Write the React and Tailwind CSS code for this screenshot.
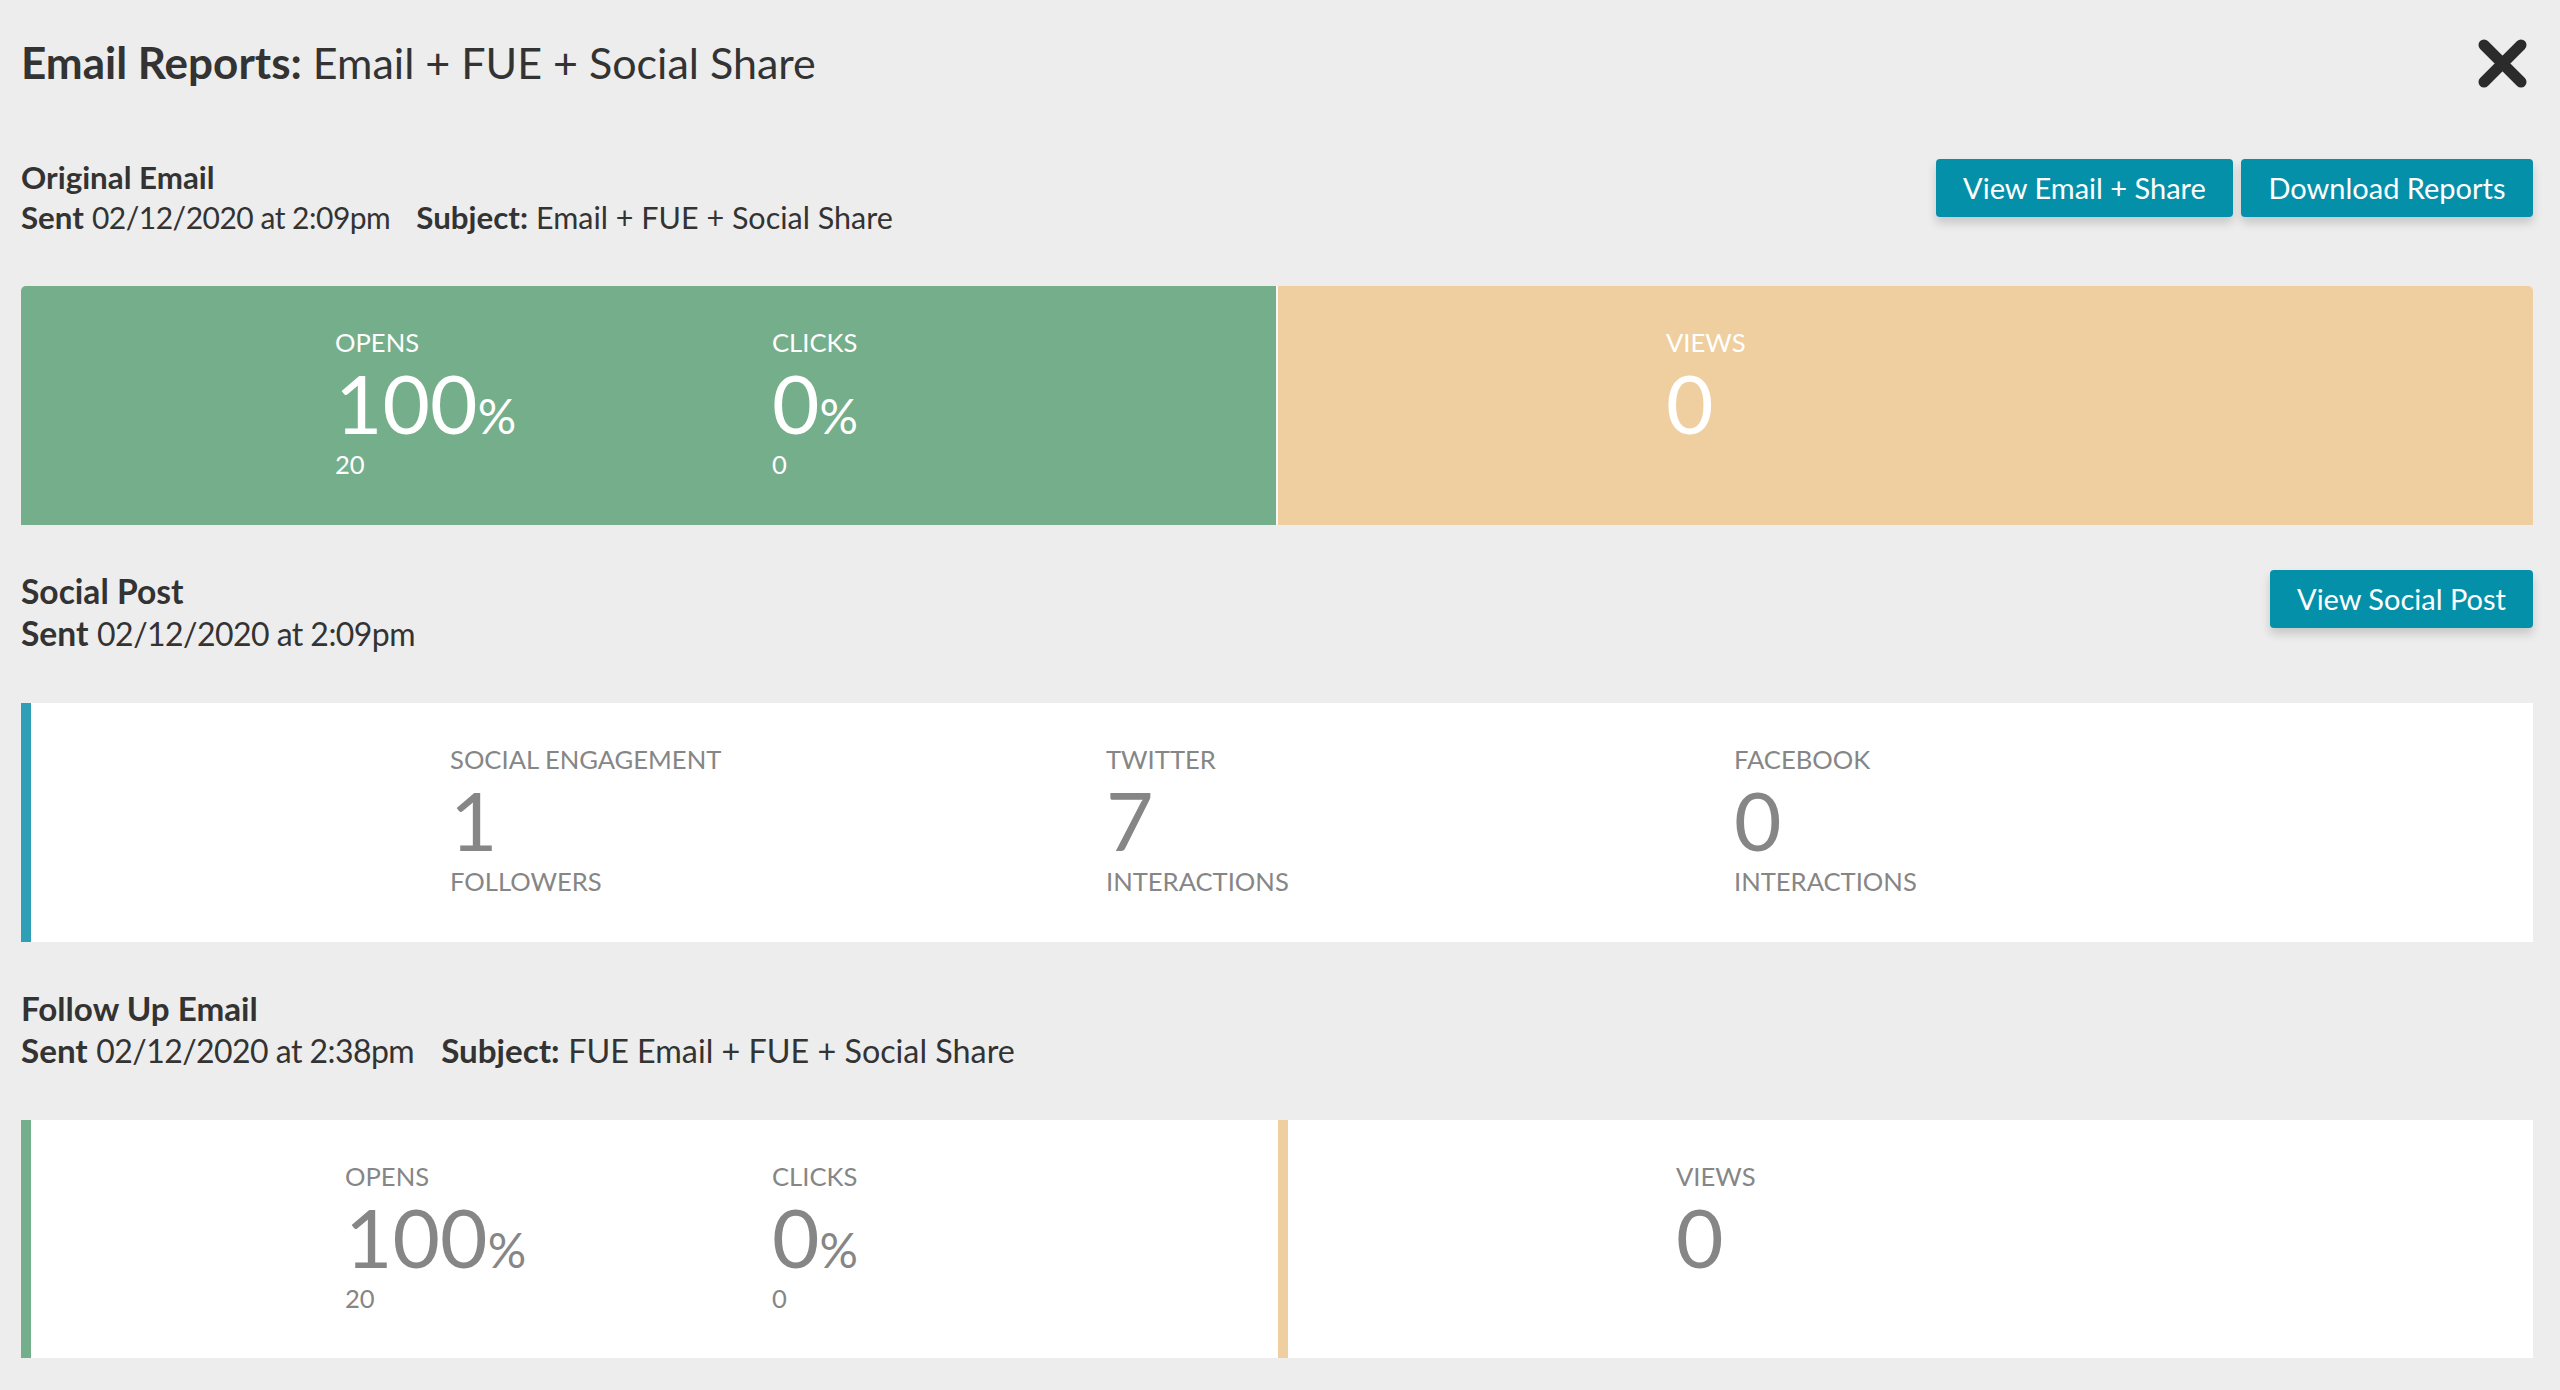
const font = { fontFamily: '"Lato", "Noto Sans", sans-serif' };

function Stat({ label, value, suffix, sub, light, width }) {
  const tone = light ? "text-white" : "text-[#868686]";
  return (
    <div className={`${tone} ${width}`}>
      <div className="text-[25.6px] leading-[30px]">{label}</div>
      <div className="flex items-baseline mt-[2px] text-[82px] leading-[86px] font-normal">
        <span>{value}</span>
        {suffix && <span className="text-[48px] leading-none">{suffix}</span>}
      </div>
      <div className="mt-[4px] text-[25.6px] leading-[30px]">{sub}</div>
    </div>
  );
}

function Heading({ title, size, leading, children }) {
  return (
    <div className={`text-[#333333] ${size} ${leading}`}>
      <div className="font-bold">{title}</div>
      <div>{children}</div>
    </div>
  );
}

function Button({ children, width }) {
  return (
    <button className={`h-[58px] ${width} rounded-[4px] bg-[#0590a9] text-white text-[29px] shadow-[0_6px_10px_rgba(0,0,0,0.16)]`}>
      {children}
    </button>
  );
}

export default function App() {
  return (
    <div style={font} className="w-[2560px] h-[1390px] bg-[#ededed] pl-[21px] pr-[27px] pt-[39px] overflow-hidden">
      <header className="flex justify-between items-start h-[118px]">
        <h1 className="text-[43px] leading-[46px] text-[#333333]">
          <span className="font-bold text-[44px]">Email Reports:</span> Email + FUE + Social Share
        </h1>
        <svg viewBox="0 0 49 49" className="w-[49px] h-[49px] mr-[6px]" fill="none" stroke="#2b2b2b" strokeWidth="11" strokeLinecap="round" aria-label="Close">
          <path d="M6 6L43 43M43 6L6 43" />
        </svg>
      </header>

      <section className="flex justify-between items-start h-[129px]">
        <Heading title="Original Email" size="text-[31.3px]" leading="leading-[40px]">
          <b>Sent</b> <span className="text-[30px] tracking-[-0.5px]">02/12/2020 at 2:09pm</span>
          <span className="inline-block w-[26px]" /><b>Subject:</b> <span className="text-[30.5px]">Email + FUE + Social Share</span>
        </Heading>
        <div className="flex gap-[8px] mt-[2px]">
          <Button width="w-[297px]">View Email + Share</Button>
          <Button width="w-[292px]">Download Reports</Button>
        </div>
      </section>

      <div className="flex h-[239px] rounded-t-[5px] overflow-hidden">
        <div className="w-[1255px] bg-[#75ae8a] pl-[314px] pt-[41px] flex">
          <Stat light width="w-[437px]" label="OPENS" value="100" suffix="%" sub="20" />
          <Stat light width="w-[300px]" label="CLICKS" value="0" suffix="%" sub="0" />
        </div>
        <div className="w-[2px] bg-white/60" />
        <div className="flex-1 bg-[#efcf9f] pl-[388px] pt-[41px]">
          <Stat light width="w-[300px]" label="VIEWS" value="0" />
        </div>
      </div>

      <section className="flex justify-between items-start pt-[45px] h-[178px]">
        <Heading title="Social Post" size="text-[33.6px]" leading="leading-[42px]">
          <b>Sent</b> <span className="text-[32px] tracking-[-0.55px]">02/12/2020 at 2:09pm</span>
        </Heading>
        <Button width="w-[263px]">View Social Post</Button>
      </section>

      <div className="flex h-[239px] bg-white border-l-[10px] border-[#2f9fb8] pl-[419px] pt-[41px]">
        <Stat width="w-[656px]" label="SOCIAL ENGAGEMENT" value="1" sub="FOLLOWERS" />
        <Stat width="w-[628px]" label="TWITTER" value="7" sub="INTERACTIONS" />
        <Stat width="w-[300px]" label="FACEBOOK" value="0" sub="INTERACTIONS" />
      </div>

      <section className="pt-[45px] h-[178px]">
        <Heading title="Follow Up Email" size="text-[33.2px]" leading="leading-[42px]">
          <b>Sent</b> <span className="text-[32px] tracking-[-0.55px]">02/12/2020 at 2:38pm</span>
          <span className="inline-block w-[27px]" /><b>Subject:</b> <span className="text-[32.3px]">FUE Email + FUE + Social Share</span>
        </Heading>
      </section>

      <div className="flex h-[238px] bg-white border-l-[10px] border-[#75ae8a]">
        <div className="w-[1247px] pl-[314px] pt-[41px] flex">
          <Stat width="w-[427px]" label="OPENS" value="100" suffix="%" sub="20" />
          <Stat width="w-[300px]" label="CLICKS" value="0" suffix="%" sub="0" />
        </div>
        <div className="flex-1 border-l-[10px] border-[#efcf9f] pl-[388px] pt-[41px]">
          <Stat width="w-[300px]" label="VIEWS" value="0" />
        </div>
      </div>
    </div>
  );
}
